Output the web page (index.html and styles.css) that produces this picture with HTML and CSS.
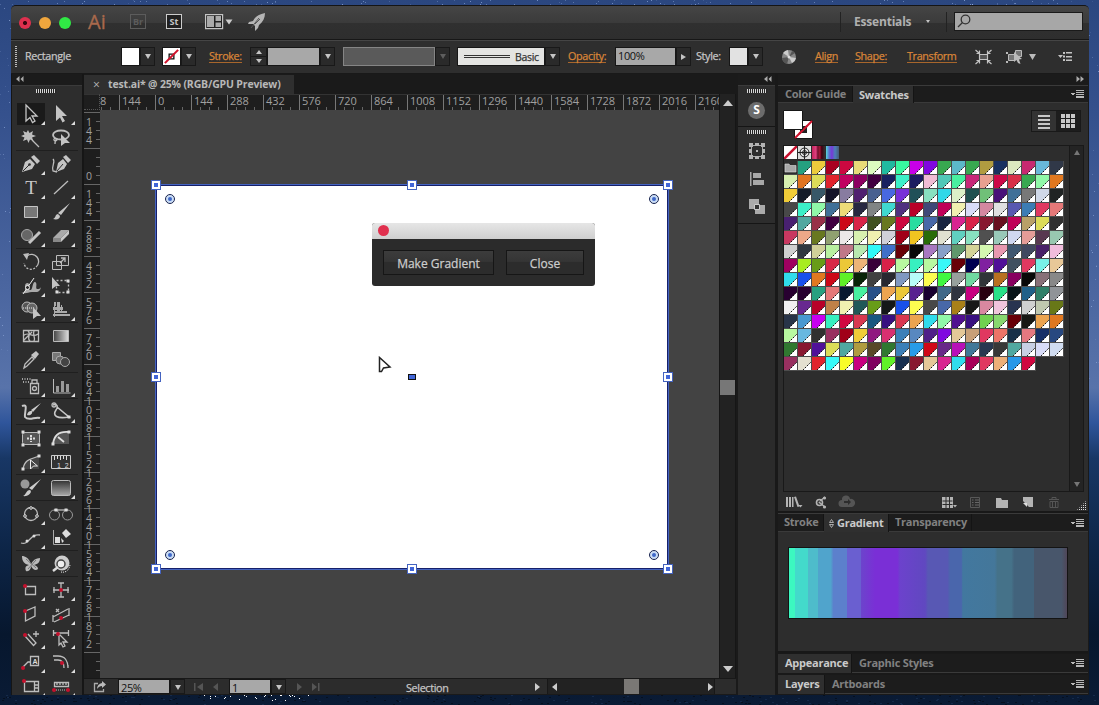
FILE: index.html
```html
<!DOCTYPE html>
<html lang="en">
<head>
<meta charset="utf-8">
<title>test.ai</title>
<link rel="stylesheet" href="styles.css">
</head>
<body>
<svg class="stars" width="1099" height="705" id="stars"></svg>
<div class="window">
  <header class="titlebar">
    <div class="lights"><i class="red"></i><i class="amber"></i><i class="green"></i></div>
    <b class="logo">Ai</b>
    <span class="app-box dim">Br</span>
    <span class="app-box">St</span>
    <svg class="arrange" width="28" height="16" viewBox="0 0 28 16"><path fill="#222" stroke="#c4c4c4" stroke-width="1.2" d="M.6.6h17v14H.6z"/><path fill="#aaa" d="M2 2h7v11H2zM10.500 2H16v5h-5.500zM10.500 8.500H16V13h-5.500z"/><path fill="#ccc" d="M20.500 5.500h7l-3.500 5z"/></svg>
    <svg class="rocket" width="20" height="20" viewBox="0 0 20 20"><path fill="#b5b5b5" d="M18 1C12 2 8 5 6 9l-4 1-1 2h5l2 2v5l3-3 1-3c4-3 6-7 6-12z"/><path stroke="#555" d="M4 16l8-10M8 12l5-5"/></svg>
    <div class="workspace"><span>Essentials</span><i class="tri small"></i></div>
    <div class="search"><svg width="14" height="14" viewBox="0 0 14 14" fill="none" stroke="#333" stroke-width="1.300"><circle cx="8.500" cy="5.500" r="4.300"/><path d="M5.500 8.500L1 13"/></svg></div>
  </header>

  <div class="control">
    <i class="vgrip"></i>
    <span class="c-label">Rectangle</span>
    <div class="combo"><i class="chip"></i><i class="dd"></i></div>
    <div class="combo"><svg class="chip" viewBox="0 0 18 18"><path d="M6.500 6.500h5v5h-5z" fill="none" stroke="#111" stroke-width="1.400"/><path d="M2 16L16 2" stroke="#d2122c" stroke-width="2.200"/></svg><i class="dd"></i></div>
    <a class="link">Stroke:</a>
    <div class="combo"><i class="stepper"></i><i class="field w52"></i><i class="dd"></i></div>
    <div class="combo"><i class="field off"></i><i class="dd off-dd"></i></div>
    <div class="combo"><div class="basic"><i></i><span>Basic</span></div><i class="dd"></i></div>
    <a class="link">Opacity:</a>
    <div class="combo"><span class="field w59">100%</span><i class="dd right"></i></div>
    <span class="c-label">Style:</span>
    <div class="combo"><i class="chip pale"></i><i class="dd"></i></div>
    <svg width="16" height="16" viewBox="0 0 16 16"><circle cx="8" cy="8" r="7" fill="#888"/><path fill="#ccc" d="M8 8L2 4a7 7 0 0 1 5-3zM8 8l7 1a7 7 0 0 1-4 5z"/><path fill="#555" d="M8 8l-7 1a7 7 0 0 0 5 6zM8 8l6-4a7 7 0 0 0-3-2z"/><circle cx="8" cy="8" r="1.500" fill="#ddd"/></svg>
    <a class="link">Align</a>
    <a class="link">Shape:</a>
    <a class="link">Transform</a>
    <svg width="17" height="16" viewBox="0 0 17 16" fill="none" stroke="#c4c4c4" stroke-width="1.200"><path fill="#555" d="M4.500 5.500h8v5h-8z"/><path d="M.5 1l4 3.500M4.500 1.500v3h-3M16.500 1l-4 3.500M12.500 1.500v3h3M.5 15l4-3.500M4.500 14.500v-3h-3M16.500 15l-4-3.500M12.500 14.500v-3h3"/></svg>
    <svg width="32" height="16" viewBox="0 0 32 16"><path fill="#777" stroke="#bbb" d="M2.500 5.500h6v6h-6zM9.500 1.500h6v6h-6z"/><path fill="#bbb" d="M0 3h2v2H0zM0 12h2v2H0zM8 3l8 7-3 .5L14.500 15 12 14l-1.500-3L8 13zM23 5h7l-3.500 6z"/></svg>
    <svg width="15" height="10" viewBox="0 0 15 10"><path fill="#c4c4c4" d="M0 3h5L2.500 6zM5 0h2v2H5zM8 0h6v1.500H8zM5 3.500h2v2H5zM8 4h6v1.500H8zM5 7h2v2H5zM8 7.500h6V9H8z"/></svg>
  </div>

  <div class="workarea">
    <aside class="tools">
      <div class="rail-head"><svg width="8" height="6" viewBox="0 0 8 6"><path fill="#aaa" d="M3.500 0v6L0 3zM7.500 0v6L4.500 3z"/></svg></div>
      <i class="grip"></i>
      <div id="tools"></div>
    </aside>

    <main class="doc">
      <div class="tabs"><div class="doc-tab"><span class="x">×</span><span>test.ai* @ 25% (RGB/GPU Preview)</span></div></div>
      <div class="stage">
        <div class="corner"></div>
        <div class="hruler" id="hruler"></div>
        <div class="vruler" id="vruler"></div>
        <div class="canvas">
          <div class="artboard">
            <i class="h" style="left:0;top:0"></i><i class="h" style="left:50%;top:0"></i><i class="h" style="left:100%;top:0"></i>
            <i class="h" style="left:0;top:50%"></i><i class="h mid" style="left:50%;top:50%"></i><i class="h" style="left:100%;top:50%"></i>
            <i class="h" style="left:0;top:100%"></i><i class="h" style="left:50%;top:100%"></i><i class="h" style="left:100%;top:100%"></i>
            <i class="r" style="left:14px;top:14px"></i><i class="r" style="left:498px;top:14px"></i><i class="r" style="left:14px;top:370px"></i><i class="r" style="left:498px;top:370px"></i>
          </div>
          <div class="dialog">
            <div class="d-bar"><i></i></div>
            <div class="d-body"><button class="b1">Make Gradient</button><button class="b2">Close</button></div>
          </div>
          <svg class="cursor" width="14" height="18" viewBox="0 0 14 18"><path d="M1.500 1.500v14h2l2-3.500 6.500-1z" fill="#fff" stroke="#222" stroke-width="1.500"/></svg>
        </div>
        <div class="vscroll"><i class="up"></i><i class="thumb"></i><i class="down"></i></div>
      </div>
      <footer class="status">
        <svg class="share" width="14" height="12" viewBox="0 0 14 12"><path d="M5 2.500H1.500v8h9V8" fill="none" stroke="#aaa" stroke-width="1.300"/><path fill="#bbb" d="M9 0l4 3.500L9 7V5C7 5 5.500 6 4 8c0-3 2-5.500 5-6z"/></svg>
        <span class="field zoomf">25%</span><i class="dd"></i>
        <svg class="nav" width="44" height="10" viewBox="0 0 44 10"><path fill="#555" d="M9 1h1.500v8H9zM18 1v8l-6-4zM33 1v8l-5-4z"/></svg>
        <span class="field page">1</span><i class="dd"></i>
        <svg class="nav" width="44" height="10" viewBox="0 0 44 10"><path fill="#555" d="M11 1v8l5-4zM26 1v8l5-4zM32 1h1.500v8H32z"/></svg>
        <span class="mode">Selection</span>
        <i class="arrow r1"></i>
        <div class="hscroll"><i class="arrow l"></i><i class="hthumb"></i><i class="arrow"></i></div>
      </footer>
    </main>

    <aside class="dock">
      <div class="rail-head end"><svg width="8" height="6" viewBox="0 0 8 6"><path fill="#aaa" d="M3.500 0v6L0 3zM7.500 0v6L4.500 3z"/></svg></div>
      <div class="dock-group one"><i class="grip"></i><span class="s-badge">S</span></div>
      <div class="dock-group two"><i class="grip"></i>
        <svg width="18" height="28" viewBox="0 0 18 28"><path d="M3.500 8.500h11v11h-11z" fill="none" stroke="#aaa"/><path fill="#b4b4b4" d="M1 6h4v4H1zM7 6h4v3H7zM13 6h4v4h-4zM1 12h3v4H1zM14 12h3v4h-3zM1 18h4v4H1zM7 19h4v3H7zM13 18h4v4h-4zM8 13h2v2H8z"/></svg>
        <svg width="18" height="28" viewBox="0 0 18 28"><path fill="#a8a8a8" d="M2 7h1.500v14H2zM5 8h8v5H5zM5 15h11v5H5z"/></svg>
        <svg width="18" height="28" viewBox="0 0 18 28"><path fill="#aaa" d="M1 6h10v10H1zM7 12h10v9H7z"/><path fill="#333" stroke="#ccc" d="M6.500 11.500h5v5h-5z"/></svg>
      </div>
      <div class="dock-rest"></div>
    </aside>

    <aside class="panels">
      <div class="rail-head end"><svg width="8" height="6" viewBox="0 0 8 6"><path fill="#aaa" d="M.5 0v6L4 3zM4.500 0v6L8 3z"/></svg></div>
      <section class="swatch-panel">
        <div class="ptabs t1"><span>Color Guide</span><span class="on">Swatches</span><i class="menu"></i></div>
        <div class="sw-top">
          <svg width="32" height="32" viewBox="0 0 32 32"><path fill="#fff" stroke="#161616" d="M11.500 10.500h18v18h-18z"/><path d="M12 28L29 11" stroke="#d0122c" stroke-width="2"/><path fill="#222" d="M17 16h7v7h-7z"/><path d="M16 24l8-8" stroke="#d0122c" stroke-width="2"/><path fill="#fff" stroke="#161616" d="M.5.5h19v19H.5z"/></svg>
          <div class="views"><i class="list"></i><i class="tiles"><b></b><b></b><b></b><b></b><b></b><b></b><b></b><b></b><b></b></i></div>
        </div>
        <div class="sw-main">
          <div class="sw-list">
            <div class="sw-row">
              <svg width="13" height="13" viewBox="0 0 13 13"><path fill="#fff" d="M0 0h13v13H0z"/><path d="M0 13L13 0" stroke="#c8102e" stroke-width="2.500"/></svg>
              <svg width="13" height="13" viewBox="0 0 13 13"><path fill="#ddd" d="M0 0h13v13H0z"/><g fill="none" stroke="#222"><circle cx="6.500" cy="6.500" r="4.500"/><circle cx="6.500" cy="6.500" r="2"/><path d="M6.500 0v13M0 6.500h13"/></g></svg>
              <i class="g1"></i><i class="g2"></i>
            </div>
            <div class="grid" id="swatches"></div>
          </div>
          <div class="sw-scroll"><i class="tri up-t"></i><i class="tri"></i></div>
        </div>
        <div class="sw-tools">
          <svg width="300" height="20" viewBox="0 0 300 20"><g fill="#b4b4b4"><path d="M4 5h2v10H4zM7 5h2v10H7zM10 5h1.500v10H10zM12 5l2-.5 3.500 10-2 .5zM16.500 13h4l-2 2.500z"/><path d="M43 5l-5 4M43 15l-5-4" stroke="#b4b4b4" stroke-width="1.300"/><circle cx="37.500" cy="10.500" r="3" fill="none" stroke="#b4b4b4" stroke-width="1.600"/><circle cx="37.500" cy="10.500" r="1"/><circle cx="42.500" cy="6" r="1.600"/><circle cx="42.500" cy="15" r="1.600"/><path fill="#555" d="M60 15a3.500 3.500 0 0 1 0-7 4 4 0 0 1 8-1 4 4 0 0 1 2 8z"/><path fill="#2d2d2d" d="M62 9h4V7l3 3-3 3v-2h-4z"/><path d="M160 5h11v11h-11z"/><path d="M160.500 9h10M160.500 12.500h10M164 5v11M167.500 5v11" stroke="#2d2d2d"/><path d="M171 13h4l-2 2.500z"/><path d="M188.500 5.500h9v10h-9z" fill="none" stroke="#585858"/><path d="M190 8h1.500M193 8h4M190 10.500h1.500M193 10.500h4M190 13h1.500M193 13h4" stroke="#666"/><path d="M214 6h5l1 2h6v8h-12zM241 5h10v10h-4l-6-6z"/><path fill="#ddd" d="M241 11h4v4z"/><path d="M267 7.500h10M270 7V5.500h4V7M268 9.500h8v6h-8zM270.500 9v6M273.500 9v6" fill="none" stroke="#555"/></g></svg>
          <i class="resize"></i>
        </div>
      </section>
      <section class="gradient-panel">
        <div class="ptabs t2"><span>Stroke</span><span class="on"><svg width="5" height="9" viewBox="0 0 5 9" fill="none" stroke="#aaa"><path d="M.5 3.500l2-3 2 3zM.5 5.500l2 3 2-3z"/></svg>Gradient</span><span>Transparency</span><i class="menu"></i></div>
        <div class="g-body"><div class="ramp"></div></div>
      </section>
      <div class="ptabs t3"><span class="on">Appearance</span><span>Graphic Styles</span><i class="menu"></i></div>
      <div class="ptabs t4"><span class="on">Layers</span><span>Artboards</span><i class="menu"></i></div>
    </aside>
  </div>
</div>
<script src="app.js"></script>
</body>
</html>
```
FILE: styles.css
```css
* { box-sizing: border-box; }
body {
  margin: 0; width: 1099px; height: 705px; overflow: hidden; padding: 5px 11px;
  font: 11px "Open Sans", "Noto Sans", sans-serif; color: #c6c6c6;
  background: linear-gradient(#2b4780, #34508c 15%, #4a659f 40%, #5873aa 55%, #2f559b 60%, #183765 65%, #0d2547 78%, #07172e 90%, #0a1b35);
}
i { font-style: normal; display: block; }
svg { display: block; }
.stars { position: absolute; left: 0; top: 0; }
.window { position: relative; width: 1078px; height: 690px; background: #2d2d2d; border-radius: 5px 5px 0 0; overflow: hidden; display: flex; flex-direction: column; border: solid #151515; border-width: 1px 0 0; }

.titlebar { height: 34px; display: flex; align-items: center; padding-left: 8px; background: linear-gradient(#454545, #3b3b3b 50%, #303030 52%, #2e2e2e); border-bottom: 1px solid #171717; }
.titlebar > * { flex: none; margin-bottom: 2px; }
.lights { display: flex; gap: 8px; width: 69px; }
.titlebar .lights { margin-bottom: 0; }
.lights i { width: 12px; height: 12px; border-radius: 50%; }
.red { background: radial-gradient(#3b0710 20%, #df304e 28%); }
.amber { background: #efa63d; }
.green { background: #30e845; }
.logo { width: 42px; font: 20px/24px "Open Sans", sans-serif; color: #a9694c; -webkit-text-stroke: .3px; }
.app-box { width: 16px; height: 15px; margin-right: 20px; border: 1px solid #ccc; background: #202020; font-weight: 700; font-size: 9px; line-height: 13px; text-align: center; }
.app-box.dim { color: #5c5c5c; border-color: #5c5c5c; background: none; }
.arrange { margin-left: 3px; }
.rocket { margin-left: 14px; }
.workspace { margin-left: 573px; display: flex; align-items: center; gap: 10px; width: 107px; height: 20px; padding-left: 13px; border: solid #222; border-width: 0 1px; font-size: 12px; font-weight: 700; color: #b0b0b0; }
.workspace span { width: 62px; letter-spacing: -.2px; white-space: nowrap; }
.search { margin-left: 7px; width: 129px; height: 19px; background: #a7a7a7; border: 1px solid #1a1a1a; padding: 1px 2px; }

.tri, .dd::after, .up, .down { width: 0; height: 0; border: solid transparent; border-width: 5px 3.500px 0; border-top-color: #c4c4c4; }
.tri.small { border-width: 3px 2.500px 0; }
.control { height: 34px; padding: 0 0 1px 4px; display: grid; align-items: center; grid-template-columns: 10px 96px 41px 47px 41px 93px 114px 111px 47px 81px 33px 52px 34px 40px 52px 68px 31px 52px auto; border-top: 1px solid #454545; border-bottom: 1px solid #191919; background: #2e2e2e; }
.vgrip { width: 2px; height: 21px; background: repeating-linear-gradient(#bbb 0 1px, transparent 1px 2px); }
.c-label, .link, .mode, .d-body button, .basic { -webkit-text-stroke: .25px; }
.c-label { font-size: 10.800px; line-height: 14px; margin-bottom: 2px; letter-spacing: -.35px; white-space: nowrap; }
.link { justify-self: start; font-size: 10.800px; line-height: 12px; letter-spacing: -.35px; color: #d98538; border-bottom: 1px solid #a8662c; white-space: nowrap; }
.combo { display: flex; height: 19px; }
.chip { width: 19px; height: 19px; background: #fff; border: 1px solid #161616; }
.chip.pale { background: #e2e2e2; }
.dd { width: 15px; height: 19px; border: 1px solid #191919; background: #2a2a2a; display: grid; place-items: center; }
.dd::after { content: ""; }
.off-dd::after { border-top-color: #5e5e5e; }
.dd.right::after { border-width: 3.500px 0 3.500px 5px; border-color: transparent transparent transparent #c4c4c4; }
.field { height: 19px; background: #a8a8a8; border: 1px solid #161616; color: #111; font-size: 11px; line-height: 16px; letter-spacing: -.4px; padding-left: 2px; }
.w52 { width: 53px; }
.w59 { width: 61px; }
.field.off { width: 92px; background: #5a5a5a; border-color: #858585; }
.stepper { width: 17px; height: 19px; border: 1px solid #191919; background: linear-gradient(#191919, #191919) 0 8px / 100% 1px no-repeat #2c2c2c; position: relative; }
.stepper::before, .stepper::after { content: ""; position: absolute; left: 5px; border: solid transparent; }
.stepper::before { top: 2px; border-width: 0 3px 4px; border-bottom-color: #c4c4c4; }
.stepper::after { bottom: 2px; border-width: 4px 3px 0; border-top-color: #c4c4c4; }
.basic { width: 88px; background: #e4e4e2; border: 1px solid #161616; display: flex; align-items: center; gap: 5px; padding-left: 6px; color: #333; font-size: 10.500px; letter-spacing: -.3px; }
.basic i { width: 46px; height: 3px; border: solid #333; border-width: 1px 0; }

.workarea { flex: 1; min-height: 0; display: grid; grid-template-columns: 73px 654px 40px 310px; background: #1a1a1a; }
.rail-head { height: 12px; padding: 2px 4px; background: #1b1b1b; display: flex; border-bottom: 1px solid #3a3a3a; }
.rail-head.end { justify-content: flex-end; }
.grip { width: 20px; height: 4px; background: repeating-linear-gradient(90deg, #d8d8d8 0 1px, #222 1px 2px); }
.tools { background: #2d2d2d; border-left: 1px solid #151515; border-right: 2px solid #161616; overflow: hidden; }
.tools > .grip { margin: 3px 0 9px 24px; }
.tgroup { display: grid; grid-template-columns: 30px 30px; grid-auto-rows: 24px; margin: 0 4px; padding-top: 1px; border-top: 1px solid #1f1f1f; }
.tgroup:first-child { border: 0; padding: 0; }
.tool { display: grid; place-items: center; position: relative; }
.tool.sel { background: linear-gradient(#1a1a1a, #1a1a1a) 1px 1px / 28px 22px no-repeat; }
.tool.more::after { content: ""; position: absolute; right: 1px; bottom: 1px; border: solid transparent; border-width: 0 0 4px 4px; border-bottom-color: #ddd; }

.doc { display: flex; flex-direction: column; min-width: 0; }
.tabs { height: 20px; background: #1a1a1a; display: flex; }
.doc-tab { width: 210px; height: 19px; margin-top: 1px; padding-bottom: 1px; background: #2f2f2f; display: flex; align-items: center; gap: 8px; padding-left: 9px; font-weight: 700; font-size: 10.500px; color: #b8b8b8; letter-spacing: -.16px; white-space: nowrap; }
.x { font-weight: 400; font-size: 12px; width: 7px; }
.stage { height: 584px; display: grid; grid-template: 16px 568px / 16px 619px 17px; }
.corner, .hruler, .vruler { background: #1e1e1e; border-top: 1px solid #333; color: #a0a0a0; overflow: hidden; }
.corner { border-right: 1px dotted #555; border-bottom: 1px dotted #555; }
.hruler { grid-column: 2; display: flex; background: repeating-linear-gradient(90deg, transparent 0 1px, #666 1px 2px, transparent 2px 9px) 0 100% / 100% 3px no-repeat #1e1e1e; }
.hruler span { flex: none; width: 36px; border-left: 1px solid #777; padding-left: 2px; font-size: 11px; line-height: 11px; }
.hruler span:first-child { width: 19px; border: 0; padding: 0; }
.vruler { border: 0; display: flex; flex-direction: column; padding-top: 2px; background: repeating-linear-gradient(#666 0 1px, transparent 1px 9px) 100% 2px / 4px 100% no-repeat #1e1e1e; }
.vruler div { flex: none; height: 36px; border-top: 1px solid #666; display: flex; flex-direction: column; justify-content: flex-end; padding: 0 0 3px 2px; font-size: 10.500px; line-height: 9px; }
.vruler span { height: 9px; }
.canvas { grid-column: 2; grid-row: 2; background: #434343; position: relative; overflow: hidden; }
.artboard { position: absolute; left: 56px; top: 75px; width: 512px; height: 384px; background: #fff; box-shadow: 0 0 0 1px #4463c0, inset 0 0 0 1px #16206a; }
.h, .r { position: absolute; width: 8px; height: 8px; margin: -4px; }
.h { background: #4166d8; border: 2px solid #fff; outline: 1px solid #4463c0; }
.h.mid { width: 8px; height: 6px; margin: -3px -4px; background: #4166d8; border: solid #111; border-width: 1px 1.500px; outline: 0; }
.r { border-radius: 50%; border: 2px solid #c9dcf5; outline: 1.500px solid #16224e; background: #3f68c8; }
.dialog { position: absolute; left: 272px; top: 113px; width: 223px; height: 63px; border-radius: 3px; overflow: hidden; background: #2b2b2b; }
.d-bar { height: 16px; background: linear-gradient(#e6e6e6, #cfcfcf); padding: 2px 6px; }
.d-bar i { width: 11px; height: 11px; border-radius: 50%; background: #e0304e; }
.d-body { display: flex; gap: 12px; padding: 11px; }
.d-body button { height: 25px; padding: 1px 0 0; border: 1px solid #161616; background: linear-gradient(#3c3c3c, #353535 45%, #2c2c2c 50%); color: #ccc; font: 12px "Open Sans", sans-serif; }
.b1 { width: 111px; }
.b2 { width: 78px; }
.cursor { position: absolute; left: 278px; top: 246px; }
.vscroll { grid-column: 3; grid-row: 1 / 3; background: #222; border-left: 1px solid #161616; border-right: 1px solid #161616; display: flex; flex-direction: column; align-items: center; padding: 6px 0; }
.up { border-width: 0 5px 6px; border-color: transparent transparent #ccc; }
.thumb { width: 15px; height: 15px; background: #777; margin-top: 274px; }
.down { margin-top: auto; border-width: 6px 5px 0; border-top-color: #ccc; }
.status { height: 16px; width: 652px; background: #2c2c2c; display: flex; align-items: center; border-top: 1px solid #181818; }
.share { margin: 0 11px 0 9px; }
.status .field, .status .dd { height: 15px; line-height: 15px; }
.status .dd { padding-top: 2px; }
.zoomf { width: 52px; }
.page { width: 42px; }
.nav { flex: none; }
.mode { margin: 1px 0 0 76px; width: 129px; font-size: 10.800px; letter-spacing: -.35px; }
.arrow { border: solid transparent; border-width: 4px 0 4px 5px; border-left-color: #ccc; }
.hscroll { margin-left: 7px; width: 168px; height: 15px; padding: 0 1px 0 4px; background: #222; display: flex; align-items: center; border: 1px solid #181818; border-width: 0 1px; }
.arrow.l { border-width: 4px 5px 4px 0; border-color: transparent #ccc; }
.hthumb { width: 15px; height: 15px; background: #7a7875; margin: 0 auto 0 67px; }

.dock { display: flex; flex-direction: column; border-right: 3px solid #191919; }
.dock .rail-head { padding-right: 3px; }
.dock-group { background: #2d2d2d; display: flex; flex-direction: column; align-items: center; border-bottom: 1px solid #151515; padding-top: 3px; }
.one { height: 41px; }
.two { height: 97px; }
.s-badge { margin-top: 9px; width: 17px; height: 17px; border-radius: 50%; background: #6c6c6c; color: #fff; font-weight: 700; font-size: 12px; line-height: 16px; text-align: center; }
.two .grip { margin-bottom: 3px; }
.dock-rest { flex: 1; background: #2b2b2b; }

.panels { display: flex; flex-direction: column; background: #191919; }
.panels .rail-head { padding-right: 4px; }
.ptabs { display: grid; background: #1c1c1c; font-size: 11px; font-weight: 700; color: #818181; border-bottom: 1px solid #3a3a3a; letter-spacing: -.25px; white-space: nowrap; }
.ptabs span { padding-left: 7px; line-height: 16px; border-right: 1px solid #141414; }
.ptabs .on { background: #2f2f2f; color: #cacaca; margin-bottom: -1px; padding-left: 6px; display: flex; align-items: center; gap: 3px; }
.menu { justify-self: end; align-self: center; margin-right: 4px; width: 13px; height: 8px; background: linear-gradient(#b8b8b8 0 0) 100% 0 / 8px 1px no-repeat, linear-gradient(#b8b8b8 0 0) 100% 2px / 8px 1px no-repeat, linear-gradient(#b8b8b8 0 0) 100% 4px / 8px 1px no-repeat, linear-gradient(#b8b8b8 0 0) 100% 6px / 8px 2px no-repeat, linear-gradient(#b8b8b8 0 0) 0 3px / 4px 1px no-repeat, linear-gradient(#b8b8b8 0 0) 1px 4px / 2px 1px no-repeat; }
.t1 { grid-template-columns: 75px 61px 1fr; height: 17px; }
.t2 { grid-template-columns: 46px 65px 83px 1fr; height: 18px; }
.t2 .on { padding-left: 5px; }
.t2 span { padding-left: 6px; }
.t3 { grid-template-columns: 74px 1fr auto; height: 19px; margin-bottom: 2px; }
.t4 { grid-template-columns: 47px 1fr auto; height: 19px; }
.t3 span:nth-child(2), .t4 span:nth-child(2) { border: 0; }
.t3 span, .t4 span { line-height: 18px; }
.t3 .on, .t4 .on { padding: 0 0 1px 7px; }
.swatch-panel { height: 427px; background: #2d2d2d; border-bottom: 2px solid #181818; }
.sw-top { display: flex; justify-content: space-between; padding: 7px 7px 0 5px; height: 42px; }
.views { display: flex; width: 50px; height: 22px; border: 1px solid #191919; background: #333; }
.views i { width: 24px; height: 20px; padding: 4px; }
.list { background: repeating-linear-gradient(#c8c8c8 0 2px, transparent 2px 4px) 6px 4px / 12px 14px no-repeat; }
.tiles { background: #1d1d1d; display: grid; grid-template-columns: repeat(3, 4px); grid-auto-rows: 4px; gap: 1px; place-content: center; }
.tiles b { background: #c8c8c8; }
.sw-main { display: flex; height: 347px; margin: 0 4px 0 5px; border: 1px solid #191919; }
.sw-list { flex: 1; }
.sw-row { display: flex; gap: 1px; height: 15px; }
.sw-row i { width: 13px; height: 13px; }
.g1 { background: linear-gradient(90deg, #c2245a, #e04080 30%, #70102c 45%, #a01838 60%, #400010 75%, #333); }
.g2 { background: linear-gradient(90deg, #58d8d8, #5a70d0 25%, #7838d8 45%, #4a80b8 70%, #485a78); }
.grid { display: grid; grid-template-columns: repeat(20, 14px); grid-auto-rows: 14px; width: 281px; height: 211px; }
.sw { position: relative; width: 14px; height: 14px; border: solid #4c4c4c; border-width: 0 1px 1px 0; }
.sw-scroll { width: 14px; background: #242424; border-left: 1px solid #191919; display: flex; flex-direction: column; justify-content: space-between; align-items: center; padding: 4px 0; }
.sw-scroll .tri { border-top-color: #777; }
.sw-scroll .up-t { transform: rotate(180deg); }
.sw-tools { padding: 0 2px 0 4px; display: flex; justify-content: space-between; align-items: flex-end; }
.sw-tools svg { width: 290px; height: 20px; overflow: hidden; flex: none; }
.sw-tools svg { width: auto; }
.resize { width: 10px; height: 10px; margin-bottom: 1px; background: conic-gradient(#ddd 25%, transparent 0) 0 0 / 2px 2px; clip-path: polygon(100% 0, 100% 100%, 0 100%); flex: none; margin-left: -26px; }
.gradient-panel { height: 140px; background: #2d2d2d; border-bottom: 2px solid #181818; border-top: 1px solid #3a3a3a; margin-bottom: 1px; }
.g-body { padding: 15px 10px; }
.ramp { width: 280px; height: 72px; border: 1px solid #141414; background: linear-gradient(90deg, #3cf8c0 2%, #43dacb 2% 7%, #4ebccb 7% 10.500%, #50a4cc 10.500% 15%, #5c80cc 16% 21%, #6a5fd0 21% 26%, #6c44cc 26%, #7a2fd6 31% 39%, #6c42cc 40%, #6048c0 49%, #5858b4 50% 57%, #4a66ac 58% 62%, #42789f 62.500%, #44779a 74%, #457289 75% 80%, #42637c 81% 88%, #48566b 88% 98%, #504658); }
```
FILE: app.js
```js
// Tool icons, each drawn in a 24x24 box; "+" marks a tool with a flyout.
const G = 'fill="none" stroke="#bdbdbd" stroke-width="1.300"';
const red = (x, y) => `<circle cx="${x}" cy="${y}" r="2" fill="#c4102c"/>`;
const sq = (x, y) => `<path fill="#ddd" d="M${x - 1.5} ${y - 1.5}h3v3h-3z"/>`;
const groups = [
  [
    ['*+', '<path d="M7 3l11 11h-5l3 5-2.500 1.500-2.500-5-4 3.500z" fill="#1a1a1a" stroke="#c4c4c4" stroke-width="1.300"/>'],
    ['+', '<path fill="#c4c4c4" d="M7 3l11 11h-5l3 5-2.500 1.500-2.500-5-4 3.500z"/>'],
    ['', `<path d="M13 14l7 7" ${G} /><path fill="#bdbdbd" d="M9 4l1.500 3L14 5l-1 3.500 4 1.500-4 1.500 1.500 3.500-3.500-1.500L9.500 17 8 13.500 4 15l1.500-3.500L2 10l3.500-1.500L4 5l3.500 1.500z"/>`],
    ['', `<ellipse cx="12" cy="9" rx="8" ry="4.500" fill="none" stroke="#bdbdbd" stroke-width="1.800"/><path d="M6 12c-3 2 1 4 2 2s-2-2-2 4" ${G} /><path fill="#c4c4c4" d="M12 8l9 9h-5l-4 3z"/>`]
  ], [
    ['+', '<path fill="#c4c4c4" d="M3 20l3-10 5-3 5 5-3 5zM12 5l3-2 6 6-3 3z"/><path d="M4 19l6-6" stroke="#2d2d2d"/><circle cx="10.500" cy="12.500" r="1.300" fill="#2d2d2d"/>'],
    ['', `<path fill="#c4c4c4" d="M7 20l2-9 5-4 4 5-3 5zM14 5l3-2 5 5-3 3z"/><path d="M4 7c3 3-2 7 0 12l4 1" ${G} /><path d="M8 19l6-7" stroke="#2d2d2d"/>`],
    ['+', '<text x="12" y="18" text-anchor="middle" font-family="Liberation Serif" font-size="19" fill="#c8c8c8">T</text>'],
    ['+', `<path d="M5 18L19 5" ${G} />`],
    ['+', '<path fill="#777" stroke="#c4c4c4" d="M5.500 6.500h13v11h-13z"/>'],
    ['+', '<path fill="#c4c4c4" d="M21 3L12 15l-3-2zM4 19c3-1 2-5 5-5l2 2c0 3-3 4-7 3z"/>'],
    ['+', '<circle cx="8" cy="11" r="5.500" fill="#666" stroke="#a8a8a8"/><path d="M10 19L21 8" stroke="#c4c4c4" stroke-width="3"/>'],
    ['+', '<path fill="#aaa" d="M4 14l8-8h8l-8 8z"/><path fill="#888" d="M4 14v4h8v-4z"/><path fill="#c8c8c8" d="M12 14l8-8v4l-8 8z"/>']
  ], [
    ['+', `<path d="M8 6a7 7 0 0 1 9 11" ${G} /><path d="M16 18a7 7 0 0 1-11-5" ${G} stroke-dasharray="2 1.500"/><path fill="#bdbdbd" d="M4 4l6-1-2 7z"/>`],
    ['+', `<path fill="#333" stroke="#bdbdbd" d="M7.500 5.500h12v10h-12zM3.500 11.500h9v8h-9z"/><path d="M11 13l5-5M12 8h4v4" ${G} />`],
    ['+', `<path d="M2 18c4 2 5-2 4-6 0-3 3-4 4-2 1 3-1 5 1 6 3 1 2-8 5-8 3 1 0 6 2 7 2 0 3 0 4-2-1 6-5 5-9 5-5 0-6 3-11 0z" fill="#aaa"/><path d="M4 20L15 4" stroke="#eee"/><circle cx="8.500" cy="13.500" r="2" fill="#2d2d2d" stroke="#eee"/>`],
    ['', `<path d="M7.500 6.500h12v12h-12z" ${G} stroke-dasharray="2 2"/><path fill="#c4c4c4" d="M3 3l8 9H7l-4 3z"/>${sq(19, 7)}${sq(19, 18)}${sq(8, 18)}`],
    ['+', '<circle cx="8" cy="9" r="5" fill="#555" stroke="#bdbdbd"/><circle cx="13" cy="10" r="5" fill="#666" stroke="#bdbdbd"/><path d="M4 10h12" stroke="#eee" stroke-dasharray="1 1"/><path fill="#c4c4c4" d="M14 9l8 9h-4l-4 3z"/>'],
    ['+', '<path fill="#aaa" d="M5 4h2v4H5zM8 4h3v10H8zM4 9h10v3H4zM5 13h13v2H5zM4 16h17v2H4zM12 7h1v7h-1zM5 5h1v14H5z"/>']
  ], [
    ['', `<path d="M4.500 6.500h15v11h-15zM4 12c6-6 8 3 15-2M9 7c4 3-2 7 2 10M15 7c-2 4 2 6 0 10M5 16l8-8" ${G} />`],
    ['', '<linearGradient id="gt"><stop stop-color="#444"/><stop offset="1" stop-color="#ddd"/></linearGradient><path fill="url(#gt)" stroke="#bbb" d="M4.500 6.500h15v11h-15z"/>'],
    ['+', `<path d="M5 20l1-4 7-7 2 2-7 7z" ${G} /><path fill="#c4c4c4" d="M12 7l5-4 3 3-4 5z"/>`],
    ['', '<path fill="#777" stroke="#aaa" d="M3.500 4.500h8v8h-8z"/><circle cx="11" cy="12" r="4" fill="#666" stroke="#aaa"/><circle cx="16" cy="14" r="4.500" fill="#444" stroke="#aaa"/>']
  ], [
    ['+', `<path d="M11.500 9.500h8v10h-8zM13 9V6h5v3" ${G} /><circle cx="15.500" cy="14.500" r="2" ${G} /><path d="M3 5h9M4 8h6" stroke="#ccc" stroke-dasharray="1 1.500" stroke-width="1.500"/>`],
    ['+', '<path d="M4.500 5v14h17" fill="none" stroke="#bbb"/><path fill="#999" d="M7 12h3v6H7zM12 7h3v11h-3zM17 10h3v8h-3z"/>']
  ], [
    ['+', '<path d="M3 6c7-3 2 7 3 11 4 5 10-1 15 1" fill="none" stroke="#c8c8c8" stroke-width="2"/><path fill="#ccc" d="M22 3l-8 9-2-2zM8 15c1-4 3-4 5-4 1 3-2 5-5 4z"/>'],
    ['+', `<path d="M4 5c5-2 5 3 3 5-4 6 1 9 13 7L8 7" fill="none" stroke="#c8c8c8" stroke-width="1.600"/><circle cx="5" cy="5" r="2" ${G} />${sq(20, 17)}`]
  ], [
    ['', `<rect x="3.500" y="6.500" width="17" height="12" rx="2" fill="#555" stroke="#bbb"/><path d="M12 9v7M8 12.500h8" stroke="#ddd" stroke-width="2" stroke-dasharray="2 1"/>${sq(4, 6)}${sq(20, 6)}${sq(4, 19)}${sq(20, 19)}`],
    ['', `<path d="M4 18C5 9 10 5 20 6v12H8" fill="#555"/><path d="M4 18C5 9 10 5 20 6M9 11l6 5" fill="none" stroke="#ddd" stroke-width="1.800"/>${sq(4, 18)}${sq(20, 6)}`],
    ['+', `<path d="M4 19C6 8 14 9 20 6v13" fill="#444"/><path d="M4 19C6 8 14 9 20 6" ${G} /><path fill="none" stroke="#eee" d="M11.500 10v9l3-3h4z"/>${sq(4, 19)}${sq(20, 6)}`],
    ['', '<path d="M2.500 5.500h19v13h-19z" fill="#333" stroke="#ccc"/><path d="M5.500 6v4M8.500 6v3M11.500 6v4M14.500 6v3M17.500 6v4" stroke="#ddd"/><text x="8" y="17.500" font-family="Liberation Sans" font-size="7" fill="#ddd">1&#160;&#160;2</text>']
  ], [
    ['', '<circle cx="6" cy="8" r="4.500" fill="#999"/><path fill="#ccc" d="M22 3l-9 11-3-2zM4 20c3-1 3-6 7-6 3 2-2 7-7 6z"/>'],
    ['+', '<linearGradient id="gx" x2="0" y2="1"><stop stop-color="#333"/><stop offset="1" stop-color="#aaa"/></linearGradient><rect x="2.500" y="4.500" width="19" height="15" rx="2" fill="url(#gx)" stroke="#bbb"/>']
  ], [
    ['+', `<circle cx="12" cy="12" r="6.500" ${G} /><g fill="#333" stroke="#ddd"><circle cx="12" cy="6" r="1.300"/><circle cx="6" cy="14" r="1.300"/><circle cx="18" cy="14" r="1.300"/></g>`],
    ['', `<circle cx="5.500" cy="13" r="5" fill="none" stroke="#999"/><circle cx="18.500" cy="13" r="5" fill="none" stroke="#999"/><path d="M5 8h14" ${G} />${sq(7, 8)}${sq(17, 8)}`],
    ['+', `<path d="M2 17c8 3 9-10 19-8" ${G} /><circle cx="8" cy="15" r="1.500" fill="#ddd"/><circle cx="15" cy="10" r="1.500" fill="#ddd"/>`],
    ['', '<path d="M4.500 4v14.500H21" fill="none" stroke="#aaa"/><path fill="#ddd" d="M6 11h5v6H6zM13 7l4-4 5 5-5 4zM12 12l3 3-2 2z"/>']
  ], [
    ['', '<path fill="#bbb" d="M12 12C10 6 6 4 3 4c0 5 2 8 7 9-4 1-4 3-3 6 3 1 5-2 5-5 2 4 5 5 7 3 0-2-1-3-4-4 4-1 6-3 6-7-4 0-7 2-9 6z"/><path d="M7 7l10 9M17 8L9 17" stroke="#777"/>'],
    ['', '<circle cx="13" cy="11" r="7.500" fill="#ccc"/><circle cx="12" cy="12" r="4" fill="#eee" stroke="#444" stroke-width="1.500"/><path d="M9 15l-5 4" stroke="#ddd" stroke-width="2.500"/><path d="M12 20c5 1 8-2 9-7" stroke="#eee" stroke-dasharray="1 1" fill="none"/>']
  ], [
    ['+', `<path d="M6.500 8.500h10v8h-10z" ${G} />${red(6, 8)}`],
    ['+', `<path d="M12 5v14M4 12h16M9 5h6M9 19h6M5 9v6M19 9v6" ${G} />${red(12, 12)}`],
    ['+', `<path d="M6.500 9L16 5v9l-9.500 5z" ${G} />${red(6, 9)}`],
    ['+', `<path d="M4 15l15-8M5 20l15-7M4 13v7M20 6v8M7 7l3 3M10 7l-3 3" ${G} />${red(12, 16)}`],
    ['+', `<path d="M6 10l9 10M9 8l8 9-2 2M17 5v6M14 8h6" ${G} />${red(6, 9)}`],
    ['+', `<path d="M4 7h15M4.500 4v6M19.500 4v6M10 8l8 8h-4l2 4-2 1-2-4-2 2z" ${G} />${red(9, 8)}`],
    ['+', `<path d="M4 17l5-5h3M11.500 6.500h8v9h-8z" ${G} /><text x="13.500" y="14" font-family="Liberation Sans" font-weight="700" font-size="7" fill="#ddd">A</text>${red(4, 18)}`],
    ['+', `<path d="M4 6h5c7 0 10 5 10 12M5 10h4c4 0 6 3 6 8M19 18v-3" ${G} />${red(13, 13)}`],
    ['+', `<path d="M5.500 7.500h14v10h-14zM15.500 7v11M16 11h4M16 14h4" ${G} />${red(5, 7)}`],
    ['+', `<path d="M5.500 8.500h14v4h-14zM8 9v2M11 9v2M14 9v2M17 9v2" ${G} /><path d="M5 16h14" stroke="#bbb" stroke-dasharray="1 1"/>${red(5, 16)}${red(19, 16)}`]
  ]
];
document.getElementById('tools').innerHTML = groups.map(g => '<div class="tgroup">' + g.map(([f, d]) =>
  `<div class="tool${f.includes('*') ? ' sel' : ''}${f.includes('+') ? ' more' : ''}"><svg width="24" height="24" viewBox="0 0 24 24">${d}</svg></div>`).join('') + '</div>').join('');

// Rulers
const top_ = ['8', 144, 0];
for (let n = 144; n <= 2160; n += 144) top_.push(n);
document.getElementById('hruler').innerHTML = top_.map(n => `<span>${n}</span>`).join('');
const side = [144, 0];
for (let n = 144; n <= 1872; n += 144) side.push(n);
side.push('');
document.getElementById('vruler').innerHTML = side.map(n => '<div>' + String(n).split('').map(c => `<span>${c}</span>`).join('') + '</div>').join('');

// Swatch colours, one string per row
const rows = [
  '- 25a080 eccb3c a80020 cc0840 e8dc78 dcfcc0 20baa0 38f8a0 c800e8 8008e0 38a850 5cb8c8 38a850 b09c40 183060 dce8c0 c82870 68b8d8 303848',
  'd8f0b0 e07420 dcdc58 e0242c c00060 8c0060 400040 182060 3cf0c8 1c1c60 f0bcd4 50c8b8 48f0a0 c82878 e8a090 cc0848 d83048 38a850 90f8a8 e07820',
  'f0cc38 141c28 385868 141428 887ca0 502070 486090 4868e0 7830d8 205058 88e0c0 30d8e8 dcf0c8 205050 70c078 481078 407098 787878 d0d8e8 202424',
  '484848 3cf0c8 90f8a8 407098 ecdc78 282840 808484 40d8d0 503080 b80028 404878 c00058 f0f0b0 d8dcf8 d488a0 e0e0e0 5858b0 3c7cb4 e03860 e47878',
  '482070 50a8a0 983048 400040 cc0818 d82448 405020 687820 cc0840 28dca0 4868a8 182440 d82490 d82448 881830 681020 c00058 b8a068 dcdc58 303030',
  'c83860 eca888 687820 90a070 ece8e8 d8f0b0 f0f0b0 d0d0d8 a00018 f0c420 286c08 e0e0d0 60d0c0 88e0c0 505050 98c8b8 d0d8f0 e49c98 583850 98c8b0',
  'd0d0d0 303840 d0d098 b8f0a0 c07888 b8e8b0 30f8f8 4070c8 680008 080808 a878c0 88a0c8 60986c d4d498 d4f8b0 e898b0 405870 404860 482068 f0bcdc',
  'a00060 a8ec20 689c18 d82848 ecc838 ecb478 380038 d82048 b8f8a0 38f0c0 b8f8a0 38f8f8 680008 000050 8020a0 501098 405060 e03860 78f0e8 e8c898',
  '30dcec 1850ec e07820 cc0818 60f028 082408 404040 282830 8098c0 b8fcf8 fcfc50 40f840 98a09c 70d8a0 303438 b87020 880060 080808 887078 888888',
  '280030 280030 28a080 e47878 081830 48f0a0 285088 eca450 ecc838 582090 180030 406888 303440 c80080 280010 28e088 081418 206088 308068 909498',
  'f0f0f0 682890 b80028 c08048 f0f0b0 205858 689c18 141818 1850e8 fcfc50 484848 4868a8 a88018 181818 d888a0 f0c4dc 283450 d0d0d0 c0c8b0 687818',
  '283448 4898d0 c800f0 38f0c0 d00840 d83850 185880 381080 d83850 eca450 30dcec 90f8a8 501090 381080 70d050 88d870 680008 181814 eca450 e07820',
  'b8f8a0 68b8e0 303030 983060 a00018 f0cc38 901880 d83070 3c80b8 5888c0 502088 8008e0 e4c898 c8a078 e03860 ec7468 183048 e47880 183068 284880',
  '307830 881830 501098 dcdc58 50a8a0 b09c40 584828 307830 3c80b8 289ce8 d00818 682888 b810b8 407898 283850 383838 50a8a0 c8d0e4 d8dcf8 d0dcf0',
  '983060 e4e0d0 e0242c 38f8f8 f8fc28 c80080 800060 60f028 183050 881830 e4c898 d82490 30dcec a80058 e03860 ecb078 2898e8 d00840'
];
const corner = '<svg width="13" height="13" viewBox="0 0 13 13"><path fill="#fff" d="M13 5v8H5z"/><path d="M4.500 13.500L13.500 4.500" stroke="#111" stroke-width="1" stroke-dasharray="2 1.200"/></svg>';
const folder = '<svg width="13" height="13" viewBox="0 0 13 13"><path fill="#a8a8a8" stroke="#ddd" stroke-width=".6" d="M1 3h4l1 1.500h6V11H1z"/></svg>';
document.getElementById('swatches').innerHTML = rows.join(' ').split(' ').map(c =>
  c === '-' ? `<div class="sw">${folder}</div>` : `<div class="sw" style="background:#${c}">${corner}</div>`).join('');

// Desktop stars and the lit ridge below the window
let seed = 7, s = '';
const rnd = () => (seed = (seed * 16807) % 2147483647) / 2147483647;
for (let i = 0; i < 150; i++) {
  const band = i % 6, x = band < 4 ? rnd() * 1099 : band < 5 ? rnd() * 11 : 1089 + rnd() * 10;
  const y = band < 4 ? rnd() * 5 : rnd() * 380;
  s += `<rect x="${x | 0}" y="${y | 0}" width="1" height="1" fill="#9fb8e8" opacity="${(.15 + rnd() * .5).toFixed(2)}"/>`;
}
for (let i = 0; i < 260; i++) s += `<rect x="${rnd() * 1099 | 0}" y="${695 + (rnd() * 10 | 0)}" width="2" height="1" fill="${i % 3 ? '#06101f' : '#152a4a'}"/>`;
for (let i = 0; i < 26; i++) s += `<rect x="${200 + rnd() * 110 | 0}" y="${695 + (rnd() * rnd() * 8 | 0)}" width="1" height="1" fill="#fff"/>`;
document.getElementById('stars').innerHTML = s;
```
